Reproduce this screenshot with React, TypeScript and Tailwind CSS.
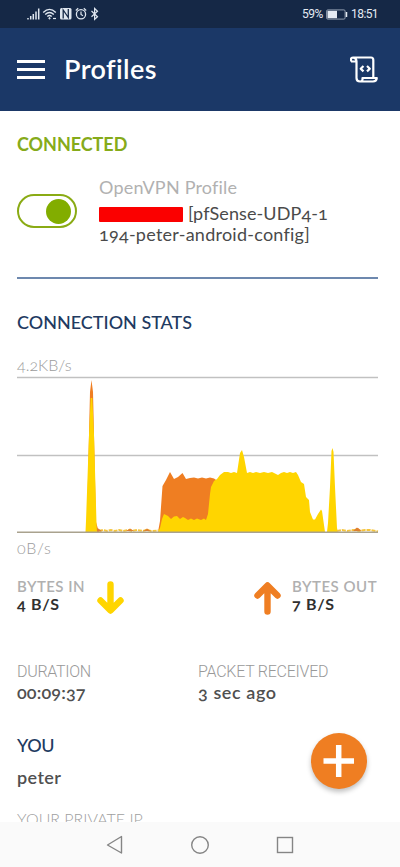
function TrafficChart() {
  return (
    <svg width={362} height={158} viewBox="0 0 362 158" className="block">
      <g fill="none" stroke="#c1c1c1" strokeWidth={1.5}>
        <path d="M0,1.5 H361 M0,79.5 H361" />
      </g>
      <path
        fill="#ef7e22"
        d="M69,156 L70,146 L73,16 L74.5,4 L76,16 L79,146 L81,153 L85,156 Z M141,156 L143,145 L145.5,110 L149,104 L153,96 L157,103 L161,101 L165.5,97 L169,103 L173,102 L177,101.5 L181,102.5 L185,101.5 L189,102.5 L193,101.5 L197,102.5 L202,106 L202,156 Z M109,155 L113,152.5 L117,155 Z M126,155 L130,152.5 L134,155 Z M334,155 L338,153 L341,152 L345,155 Z"
      />
      <path
        fill="#ffd500"
        d="M68.5,156 L69,145 L72,59 L73.7,22 L75.3,22 L77,59 L79.5,147 L80,156 Z M141,156 L143,152 L145,143 L147,138 L151,140 L154,143 L157,140.5 L160,140 L163,143 L166,141 L168,142 L171,144 L174,142.5 L177,144 L180,142.5 L184,144 L187,142.5 L189,144 L191,138 L193,118 L194,111 L197,105 L200,103 L203,99 L207,96 L211,96 L214,97 L217,96 L220,97 L223,77 L225,74 L227,81 L230,97 L233,96 L236,97 L239,96 L243,97 L247,96 L251,97 L255,96 L259,98 L261,99 L264,97 L267,96 L270,97 L273,96 L276,97 L279,96 L281,99 L284,106 L287,108 L289,121 L292,124 L293,136 L296,143.5 L298,143.5 L301,138 L304,133.5 L305,135 L308,156 Z M310,156 L311,147 L313,111 L314.5,75 L315.5,72 L316.5,76 L318,111 L320,152 L321,156 Z"
      />
      <path
        fill="none"
        stroke="#f5c43c"
        strokeWidth={2}
        strokeDasharray="4 1"
        d="M82,155 L86,154 L90,155 L94,154 L98,155 L102,154 L106,155 L111,154 L115,155 L120,154 L126,155 L130,154 L134,155 L142,154.5 M320,155 L325,154 L330,155 L336,154 L342,155 L348,154 L353,154 L361,155.5"
      />
      <path d="M109,155 L113,153 L117,155 Z M126,155 L130,153 L134,155 Z M336,155 L340,151.5 L344,155 Z M80,155 L80.5,152 L85,155 Z" fill="#dd8030" />
      <path d="M0,156.25 H361" fill="none" stroke="#a9a28e" strokeWidth={1.3} />
    </svg>
  );
}

function StatusIcons() {
  return (
    <svg width={74} height={16} viewBox="26 6 74 16" fill="none" stroke="#dfe6ef">
      <path d="M28,19.5 V18 M30.7,19.5 V16 M33.3,19.5 V14 M36,19.5 V11.5 M38.7,19.5 V8.5" strokeWidth={1.5} />
      <path d="M43.2,12.5 Q49.5,6.2 55.8,12.5 M45.2,14.6 Q49.5,10.5 53.8,14.6 M47.3,16.6 Q49.5,14.6 51.7,16.6" strokeWidth={1.4} />
      <circle cx={49.5} cy={18.3} r={0.7} fill="#dfe6ef" />
      <path d="M53,18.5 h3" strokeWidth={1.2} />
      <rect x={60} y={8} width={11.5} height={11.5} rx={1.5} fill="#dfe6ef" stroke="none" />
      <path d="M63.2,18.5 V10 L68.3,17.5 V9" stroke="#152846" strokeWidth={1.3} />
      <circle cx={81} cy={14.2} r={4.6} strokeWidth={1.3} />
      <path d="M81,11.5 V14.5 L83,15.7 M75.8,10.5 L78.2,8.3 M86.2,10.5 L83.8,8.3" strokeWidth={1.2} />
      <path d="M91.5,11 L97.5,16.7 L94.6,19.3 V8.5 L97.5,11.2 L91.5,16.8" strokeWidth={1.2} />
    </svg>
  );
}

function StatusBar() {
  return (
    <div className="flex h-7 items-center bg-[#152846] pr-[22px] pl-[26px] font-['Roboto',sans-serif] text-[12px] normal-nums text-[#e4eaf2]">
      <StatusIcons />
      <span className="ml-auto w-6 tracking-[-0.6px]">59%</span>
      <svg width={22} height={11} viewBox="0 0 22 11" className="mr-[3px]">
        <rect x={0.6} y={0.9} width={18.5} height={9.2} rx={1.2} fill="none" stroke="#8f9cae" />
        <rect x={1.5} y={1.8} width={9.5} height={7.4} fill="#e4eaf2" />
        <path d="M20.5,3 v5" stroke="#e4eaf2" strokeWidth={1.5} />
      </svg>
      <span className="tracking-[-0.6px]">18:51</span>
    </div>
  );
}

function Header() {
  return (
    <header className="flex h-[83px] items-center bg-[#1b3867] pr-[22px] pl-[17px] text-white">
      <div className="flex w-7 flex-col gap-[5px]">
        <span className="h-[3px] bg-white" />
        <span className="h-[3px] bg-white" />
        <span className="h-[3px] bg-white" />
      </div>
      <h1 className="-mt-px ml-[19px] text-[27px] leading-8 font-semibold tracking-[0.4px]">Profiles</h1>
      <svg width={28} height={27} viewBox="0 0 28 27" className="ml-auto" fill="none" stroke="white" strokeWidth={2.2} strokeLinejoin="round">
        <path d="M1,5.5 V3 Q1,1.5 3,1.5 H21 Q23.3,1.5 23.3,4 V21 M1,5.5 H6.5 V22 Q6.5,25.5 10,25.5 H23 Q26.5,25.5 26.8,22 H12.5 V23.5 Q12.3,25.5 10,25.5 M3,1.5 Q6.5,2 6.5,5.5" />
        <path d="M13.5,10 L10.7,12.7 L13.5,15.4 M17,10 L19.8,12.7 L17,15.4" />
      </svg>
    </header>
  );
}

function Arrow({ color, className = "" }: { color: string; className?: string }) {
  return (
    <svg width={27} height={34} viewBox="0 0 27 34" className={className}>
      <path
        d="M13.5,3.5 V29 M3.5,19.5 L13.5,29.5 L23.5,19.5"
        fill="none"
        stroke={color}
        strokeWidth={6.4}
        strokeLinecap="round"
        strokeLinejoin="round"
      />
    </svg>
  );
}

function ProfileRow() {
  return (
    <div className="flex pt-[22px]">
      <div className="mt-[17px] flex h-[34px] w-[60px] items-center justify-end rounded-full border-2 border-[#8aab14] pr-1">
        <span className="size-[25px] rounded-full bg-[#82ad00]" />
      </div>
      <div className="ml-[22px] text-[18px] leading-[21px]">
        <div className="h-[26px] tracking-[0.2px] text-[#b1b1b1]">OpenVPN Profile</div>
        <div className="flex items-center text-[#4a4a4a]">
          <span className="mt-0.5 mr-[5px] h-[15px] w-[84px] rounded-[1px] bg-[#fb0000]" />
          <span className="tracking-[0.1px]">[pfSense-UDP4-1</span>
        </div>
        <div className="tracking-[0.25px] text-[#4a4a4a]">194-peter-android-config]</div>
      </div>
    </div>
  );
}

function NavBar() {
  return (
    <nav className="h-[45px] bg-[#fafafa]">
      <svg width={400} height={45} viewBox="0 0 400 45" fill="none" stroke="#858585" strokeWidth={1.4}>
        <path d="M107.5,23 L121.5,14.5 V31 Z" strokeLinejoin="round" />
        <circle cx={200} cy={23} r={8.3} />
        <rect x={277.5} y={15.5} width={15} height={15} />
      </svg>
    </nav>
  );
}

export default function App() {
  return (
    <div className="relative flex h-[867px] w-[400px] flex-col overflow-hidden bg-white font-['Lato',sans-serif] oldstyle-nums">
      <StatusBar />
      <Header />
      <main className="min-h-0 flex-1 overflow-hidden px-[17px] pt-[23px]">
        <h2 className="text-[18px] leading-[21px] font-bold tracking-[-0.05px] text-[#86ab1a]">CONNECTED</h2>
        <ProfileRow />
        <div className="mt-[32px] h-0.5 w-[361px] bg-[#6d88ae]" />

        <h2 className="mt-[33px] text-[18px] leading-[21px] font-medium text-[#213a61]">CONNECTION STATS</h2>
        <div className="mt-[21px] h-[22px] text-[16px] leading-[21px] font-light text-[#9c9c9c]">4.2KB/s</div>
        <TrafficChart />
        <div className="mt-[3px] h-[22px] text-[16px] leading-[21px] font-light tracking-[0.6px] text-[#9c9c9c]">0B/s</div>

        <div className="mt-[18px] flex h-[38px] w-[361px] leading-[18px]">
          <div className="w-20 text-[15px]">
            <div className="font-semibold tracking-[0.45px] whitespace-nowrap text-[#b0b0b0]">BYTES IN</div>
            <div className="text-[16px] font-bold tracking-[0.7px] text-[#303030]">4 B/S</div>
          </div>
          <Arrow color="#ffd500" className="mt-1" />
          <Arrow color="#ef7e22" className="mt-1 ml-auto rotate-180" />
          <div className="ml-[11px] w-[86px] text-[15px]">
            <div className="font-semibold tracking-[0.5px] whitespace-nowrap text-[#b0b0b0]">BYTES OUT</div>
            <div className="text-[16px] font-bold tracking-[0.7px] text-[#303030]">7 B/S</div>
          </div>
        </div>

        <div className="mt-[46px] flex leading-[21px]">
          <div className="w-[181px]">
            <div className="font-['Roboto',sans-serif] text-[16px] font-light tracking-[-0.3px] text-[#999]">DURATION</div>
            <div className="text-[18px] font-semibold tracking-[0.15px] text-[#505050]">00:09:37</div>
          </div>
          <div>
            <div className="font-['Roboto',sans-serif] text-[16px] font-light tracking-[-0.25px] text-[#999]">PACKET RECEIVED</div>
            <div className="text-[18px] font-semibold tracking-[0.6px] text-[#505050]">3 sec ago</div>
          </div>
        </div>

        <h2 className="mt-[32px] text-[18px] leading-[21px] font-medium tracking-[-0.4px] text-[#213a61]">YOU</h2>
        <div className="mt-[11px] text-[18px] leading-[21px] font-semibold tracking-[0.4px] text-[#505050]">peter</div>
        <div className="mt-[20px] text-[16px] leading-[21px] font-light text-[#a0a0a0]">YOUR PRIVATE IP</div>
      </main>
      <NavBar />
      <button className="absolute top-[733px] left-[311px] flex size-14 items-center justify-center rounded-full bg-[#ef7e22] shadow-[0_3px_5px_rgba(0,0,0,0.25)]">
        <svg width={32} height={34} viewBox="0 0 32 34">
          <path d="M0.5,17 H31 M15.7,1 V33" stroke="white" strokeWidth={5.5} />
        </svg>
      </button>
    </div>
  );
}
